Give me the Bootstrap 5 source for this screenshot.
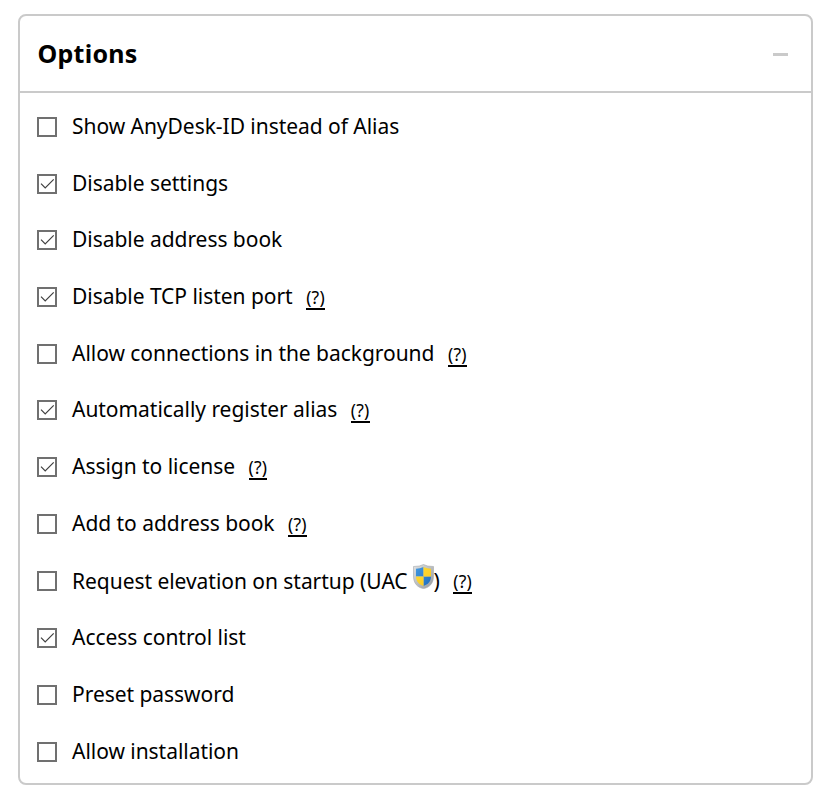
<!DOCTYPE html>
<html lang="en">
<head>
<meta charset="utf-8">
<meta name="viewport" content="width=device-width, initial-scale=1">
<title>Options</title>
<link href="https://cdn.jsdelivr.net/npm/bootstrap@5.3.0/dist/css/bootstrap.min.css" rel="stylesheet">
<style>
body{font-family:"Noto Sans","Open Sans",sans-serif;color:#000;background:#fff}
.options{margin:14px 24px 0 18px;height:771px;border:2px solid #cacaca;border-radius:8px}
.options-head{height:77px;border-bottom:2px solid #cacaca;padding:0 23px 0 17.5px}
.options-head h1{font-size:25px;line-height:34px;letter-spacing:.25px;padding-bottom:2px}
.collapse-bar{width:15px;height:3px;background:#cacaca;margin-top:2px}
.options-list{padding-top:5.6px}
.opt{height:56.67px;padding-left:17px;font-size:21px;line-height:30px;letter-spacing:-.04px}
.opt label{margin-top:-2px}
.opt-uac{height:58.3px}
.opt-uac label{margin-top:0}
.opt .form-check-input{width:20px;height:20px;margin:0 15px 0 0;flex:none;border:2px solid #707070;border-radius:0;background-color:#fff;background-size:16px 16px}
.opt .form-check-input:checked{background-image:url("data:image/svg+xml,%3Csvg xmlns='http://www.w3.org/2000/svg' viewBox='0 0 16 16'%3E%3Cpath d='M2 7.7l4.2 4.3L14.7 3.3' fill='none' stroke='%23404040' stroke-width='1.2'/%3E%3C/svg%3E")}
.help{font-size:17.5px;line-height:21px;color:#000;border-bottom:2px solid #000;margin:3px 0 0 13.5px;letter-spacing:.2px}
.shield{width:21px;height:25px;margin:-8px 0 0 5px;flex:none}
</style>
</head>
<body>
<main class="options">
<header class="options-head d-flex align-items-center justify-content-between"><h1 class="fw-bold m-0">Options</h1><span class="collapse-bar"></span></header>
<div class="options-list">
<div class="opt d-flex align-items-center"><input class="form-check-input" type="checkbox" id="o1"><label for="o1">Show AnyDesk-ID instead of Alias</label></div>
<div class="opt d-flex align-items-center"><input class="form-check-input" type="checkbox" id="o2" checked><label for="o2">Disable settings</label></div>
<div class="opt d-flex align-items-center"><input class="form-check-input" type="checkbox" id="o3" checked><label for="o3">Disable address book</label></div>
<div class="opt d-flex align-items-center"><input class="form-check-input" type="checkbox" id="o4" checked><label for="o4">Disable TCP listen port</label><a class="help text-decoration-none">(?)</a></div>
<div class="opt d-flex align-items-center"><input class="form-check-input" type="checkbox" id="o5"><label for="o5">Allow connections in the background</label><a class="help text-decoration-none">(?)</a></div>
<div class="opt d-flex align-items-center"><input class="form-check-input" type="checkbox" id="o6" checked><label for="o6">Automatically register alias</label><a class="help text-decoration-none">(?)</a></div>
<div class="opt d-flex align-items-center"><input class="form-check-input" type="checkbox" id="o7" checked><label for="o7">Assign to license</label><a class="help text-decoration-none">(?)</a></div>
<div class="opt d-flex align-items-center"><input class="form-check-input" type="checkbox" id="o8"><label for="o8">Add to address book</label><a class="help text-decoration-none">(?)</a></div>
<div class="opt opt-uac d-flex align-items-center"><input class="form-check-input" type="checkbox" id="o9"><label for="o9" class="d-flex align-items-center">Request elevation on startup (UAC
<svg class="shield" viewBox="0 0 21 25"><defs><clipPath id="shieldClip"><path d="M10.500 3Q14 4.800 18 4.800V12C18 17.500 15 20.500 10.500 22C6 20.500 3 17.500 3 12V4.800Q7 4.800 10.500 3Z"/></clipPath><linearGradient id="rim" x2="1" y2="1"><stop stop-color="#dfe2e4"/><stop offset="1" stop-color="#979b9e"/></linearGradient><linearGradient id="blue" x2="1" y2="1"><stop stop-color="#4a9fe4"/><stop offset="1" stop-color="#1464ba"/></linearGradient><linearGradient id="gold" x2="1" y2="1"><stop stop-color="#ffe13a"/><stop offset="1" stop-color="#f8c21c"/></linearGradient></defs><path d="M10.500.5Q14 2.600 20.500 2.500V12C20.500 19.500 16.500 23.500 10.500 24.600C4.500 23.500.5 19.500.5 12V2.500Q7 2.600 10.500.5Z" fill="url(#rim)" stroke="#a4a8ab" stroke-width=".6"/><g clip-path="url(#shieldClip)"><path fill="url(#blue)" d="M0 0h10.500v12.500H0zM10.500 12.500H21V26H10.500z"/><path fill="url(#gold)" d="M10.500 0H21v12.500H10.500zM0 12.500h10.500V26H0z"/></g></svg>)</label><a class="help text-decoration-none">(?)</a></div>
<div class="opt d-flex align-items-center"><input class="form-check-input" type="checkbox" id="o10" checked><label for="o10">Access control list</label></div>
<div class="opt d-flex align-items-center"><input class="form-check-input" type="checkbox" id="o11"><label for="o11">Preset password</label></div>
<div class="opt d-flex align-items-center"><input class="form-check-input" type="checkbox" id="o12"><label for="o12">Allow installation</label></div>
</div>
</main>
<script src="https://cdn.jsdelivr.net/npm/bootstrap@5.3.0/dist/js/bootstrap.bundle.min.js"></script>
</body>
</html>
